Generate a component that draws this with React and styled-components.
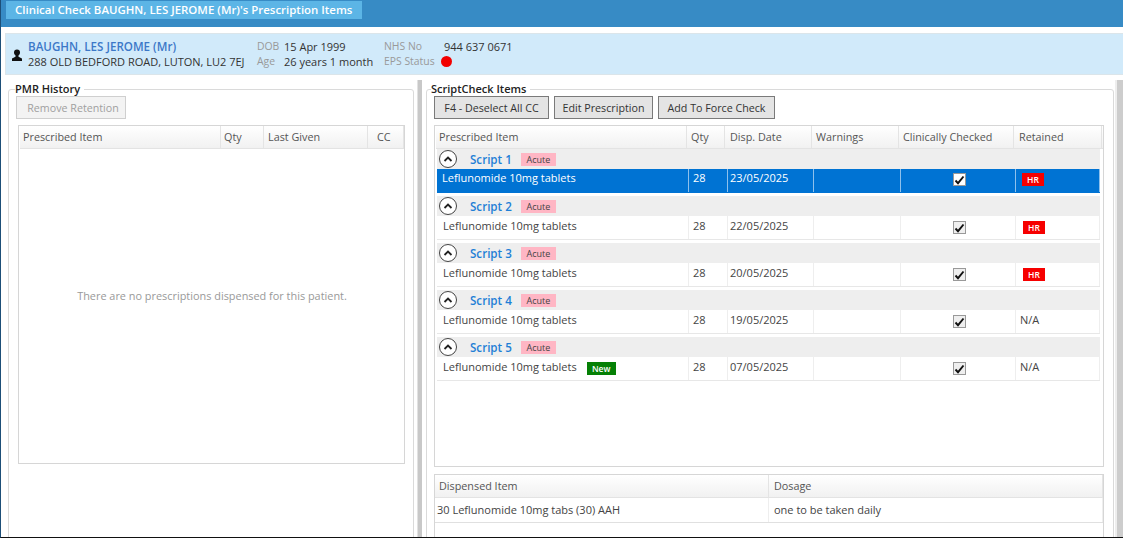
import React from "react";
import styled, { createGlobalStyle } from "styled-components";

const Global = createGlobalStyle`
  html, body { margin: 0; padding: 0; background: #fff; }
  body { font-family: "Open Sans", "Noto Sans", sans-serif; font-size: 11px; color: #444; }
  * { box-sizing: border-box; }
`;

const Page = styled.div`
  width: 1123px; height: 538px; overflow: hidden; display: flex; flex-direction: column;
  background: #fff; border-bottom: 1px solid #111; border-left: 1px solid #1d4f78;
`;
const TitleBar = styled.header`
  height: 27px; flex: none; background: #378bc5; padding: 1px 0 0 5px;
`;
const TitleTab = styled.div`
  width: 356px; height: 18px; background: #5cb5e6; color: #fff; font-weight: 600; font-size: 11.45px;
  line-height: 18px; padding-left: 9px; white-space: nowrap;
`;
const Band = styled.section`
  margin: 6px 0 0 4px; height: 42px; flex: none; background: #d1eafa; border: 1px solid #dbe5ea; border-right: 0;
  display: flex; align-items: center; padding-left: 5px; line-height: 15px; font-size: 11px; color: #333;
`;
const PersonIcon = styled.svg`width: 12px; height: 13px; margin: 3px 5px 0 0; flex: none;`;
const PatientCol = styled.div`width: 229px; white-space: nowrap;`;
const PatientName = styled.div`color: #3c78c8; font-weight: 600; font-size: 11.6px;`;
const InfoGrid = styled.div`
  display: grid; grid-template-columns: ${p => p.$cols}; white-space: nowrap;
`;
const InfoLabel = styled.span`color: #999; font-size: 10.4px;`;
const InfoValue = styled.span`color: #333; display: flex; align-items: center;`;
const RedDot = styled.i`
  display: inline-block; width: 11px; height: 11px; border-radius: 50%; background: #f20000; margin-left: -3px;
`;
const Main = styled.main`
  flex: 1; min-height: 0; display: flex; padding: 5px 0 0 7px; overflow: hidden;
`;
const Group = styled.fieldset`
  margin: 2px 0 0; padding: ${p => p.$pad}; width: ${p => p.$w}px; height: 520px; flex: none;
  border: 1px solid #dadada; border-radius: 3px; min-inline-size: 0;
`;
const Legend = styled.legend`
  padding: 0 4px 0 0; margin-left: -3px; font-size: 11px; font-weight: 600; color: #222; line-height: 14px;
`;
const Splitter = styled.div`
  width: 5px; flex: none; background: #c8c8c8; border-left: 1px solid #e2e2e2; margin: 0 4px 0 3px;
`;
const Button = styled.button`
  height: 23px; width: ${p => p.$w}px; padding: 0; font: inherit; font-size: 10.7px; border-width: 1px; border-style: solid;
  border-color: #7a7a7a; color: #333; background: #e4e4e4;
`;
const RetentionButton = styled(Button)`
  display: block; margin: 0 0 6px -2px; padding-left: 4px; border-color: #cfcfcf; color: #a0a0a0; background: #f3f3f3;
`;
const Toolbar = styled.div`display: flex; gap: 5px; margin-bottom: 6px;`;
const TableBox = styled.div`
  border: 1px solid #d6d6d6; height: ${p => p.$h}px; width: ${p => p.$w}px; padding-left: 1px;
  display: flex; flex-direction: column;
`;
const HeaderRow = styled.div`
  display: grid; grid-template-columns: ${p => p.$cols}; height: 23px; flex: none;
  background: linear-gradient(#fff, #f1f1f1); border-bottom: 1px solid #e3e3e3; color: #555;
`;
const HeaderCell = styled.div`
  border-right: 1px solid #e4e4e4; padding-left: ${p => p.$pad ?? 3}px; line-height: 22px; white-space: nowrap; font-size: 10.8px;
`;
const EmptyNote = styled.div`
  flex: 1; display: flex; align-items: center; justify-content: center; color: #999; padding-bottom: 22px; font-size: 10.9px;
`;
const ScriptGroup = styled.div`margin: 0 0 3px 1px; width: 663px;`;
const GroupHead = styled.div`
  height: 20px; background: #eee; display: flex; align-items: center; padding-left: 2px;
`;
const Collapse = styled.span`
  width: 18px; height: 18px; border: 1px solid #444; border-radius: 50%; background: #fff; flex: none;
  display: flex; align-items: center; justify-content: center;
`;
const ScriptName = styled.span`
  color: #1f7fd6; font-weight: 600; font-size: 11.6px; margin-left: 13px; width: 51px;
`;
const AcuteTag = styled.span`
  background: #ffb6c4; color: #444; font-size: 9px; height: 13px; width: 35px; line-height: 13px; text-align: center;
`;
const Row = styled.div`
  display: grid; grid-template-columns: ${p => p.$cols}; height: 24px;
  background: ${p => p.$sel ? "#0073d3" : "#fff"}; color: ${p => p.$sel ? "#fff" : "#444"};
  border-bottom: 1px solid ${p => p.$sel ? "#0073d3" : "#e7e7e7"};
`;
const Cell = styled.div`
  border-right: 1px solid ${p => p.$sel ? "#8fc1ec" : "#eeeeee"}; padding-left: ${p => p.$pad ?? 3}px; padding-top: ${p => p.$sel ? 1 : 2}px;
  line-height: 16px; white-space: nowrap; display: flex; align-items: flex-start;
  justify-content: ${p => p.$center ? "center" : "flex-start"};
`;
const Check = styled.span`
  width: 13px; height: 13px; background: ${p => p.$sel ? "#fff" : "#efefef"}; border: 1px solid #999; margin-top: 3px;
  display: flex; align-items: center; justify-content: center;
`;
const HrBadge = styled.span`
  background: #f60000; color: #fff; font-size: 8.5px; font-weight: 600; width: 22px; height: 13px; line-height: 13px;
  text-align: center; margin: 3px 0 0 ${p => p.$sel ? 2 : 3}px;
`;
const NewBadge = styled.span`
  background: #058005; color: #fff; font-size: 8.5px; font-weight: 600; width: 29px; height: 13px; line-height: 13px;
  text-align: center; margin: 3px 0 0 10px;
`;
const DispenseBox = styled(TableBox)`margin-top: 7px; padding-left: 0;`;
const DispRow = styled.div`
  display: grid; grid-template-columns: ${p => p.$cols}; height: 25px; border-bottom: 1px solid #e0e0e0; line-height: 24px;
`;
const DispCell = styled.div`
  padding-left: ${p => p.$pad}px; border-right: 1px solid #eee; white-space: nowrap;
`;
const ScrollRail = styled.div`
  width: 8px; flex: none; margin-left: 1px; background: #cdcdcd; border-left: 2px solid #eee;
`;

const Person = () => (
  <PersonIcon viewBox="0 0 12 13"><circle cx="6" cy="3.5" r="3" fill="#111" /><path d="M4.5 6h3v1.8L11 9.5V12H1V9.5l3.5-1.7z" fill="#111" /></PersonIcon>
);
const Chevron = () => (
  <svg width="10" height="8" viewBox="0 0 10 8"><path d="M1.5 6L5 2.5 8.5 6" fill="none" stroke="#222" strokeWidth="1.8" /></svg>
);
const Tick = () => (
  <svg width="11" height="10" viewBox="0 0 11 10"><path d="M1.5 5.5L4 8.2 9.5 1.5" fill="none" stroke="#111" strokeWidth="1.9" /></svg>
);

const COLS = "251px 38px 87px 87px 115px 88px";
const SCRIPT_COLS = "252px 39px 86px 87px 115px 84px";
const DISP_COLS = "334px 1fr";

const scripts = [
  { n: 1, date: "23/05/2025", ret: "HR", sel: true },
  { n: 2, date: "22/05/2025", ret: "HR" },
  { n: 3, date: "20/05/2025", ret: "HR" },
  { n: 4, date: "19/05/2025", ret: "N/A" },
  { n: 5, date: "07/05/2025", ret: "N/A", isNew: true },
];

export default function App() {
  return (
    <Page>
      <Global />
      <TitleBar><TitleTab>Clinical Check BAUGHN, LES JEROME (Mr)'s Prescription Items</TitleTab></TitleBar>
      <Band>
        <Person />
        <PatientCol>
          <PatientName>BAUGHN, LES JEROME (Mr)</PatientName>
          <div>288 OLD BEDFORD ROAD, LUTON, LU2 7EJ</div>
        </PatientCol>
        <InfoGrid $cols="27px 100px">
          <InfoLabel>DOB</InfoLabel><InfoValue>15 Apr 1999</InfoValue>
          <InfoLabel>Age</InfoLabel><InfoValue>26 years 1 month</InfoValue>
        </InfoGrid>
        <InfoGrid $cols="60px 100px">
          <InfoLabel>NHS No</InfoLabel><InfoValue>944 637 0671</InfoValue>
          <InfoLabel>EPS Status</InfoLabel><InfoValue><RedDot /></InfoValue>
        </InfoGrid>
      </Band>
      <Main>
        <Group $w={406} $pad="0 9px">
          <Legend>PMR History</Legend>
          <RetentionButton disabled $w={110}>Remove Retention</RetentionButton>
          <TableBox $w={387} $h={339}>
            <HeaderRow $cols="201px 43px 104px 1fr">
              <HeaderCell>Prescribed Item</HeaderCell>
              <HeaderCell>Qty</HeaderCell>
              <HeaderCell $pad={4}>Last Given</HeaderCell>
              <HeaderCell $pad={9}>CC</HeaderCell>
            </HeaderRow>
            <EmptyNote>There are no prescriptions dispensed for this patient.</EmptyNote>
          </TableBox>
        </Group>
        <Splitter />
        <Group $w={688} $pad="0 7px">
          <Legend>ScriptCheck Items</Legend>
          <Toolbar>
            <Button $w={115}>F4 - Deselect All CC</Button>
            <Button $w={99}>Edit Prescription</Button>
            <Button $w={117}>Add To Force Check</Button>
          </Toolbar>
          <TableBox $w={670} $h={342}>
            <HeaderRow $cols={COLS}>
              <HeaderCell>Prescribed Item</HeaderCell>
              <HeaderCell $pad={4}>Qty</HeaderCell>
              <HeaderCell $pad={5}>Disp. Date</HeaderCell>
              <HeaderCell $pad={4}>Warnings</HeaderCell>
              <HeaderCell $pad={4}>Clinically Checked</HeaderCell>
              <HeaderCell $pad={5}>Retained</HeaderCell>
            </HeaderRow>
            {scripts.map(s => (
              <ScriptGroup key={s.n}>
                <GroupHead>
                  <Collapse><Chevron /></Collapse>
                  <ScriptName>Script {s.n}</ScriptName>
                  <AcuteTag>Acute</AcuteTag>
                </GroupHead>
                <Row $cols={SCRIPT_COLS} $sel={s.sel}>
                  <Cell $sel={s.sel} $pad={s.sel ? 5 : 6}>
                    Leflunomide 10mg tablets{s.isNew && <NewBadge>New</NewBadge>}
                  </Cell>
                  <Cell $sel={s.sel} $pad={4}>28</Cell>
                  <Cell $sel={s.sel} $pad={2}>{s.date}</Cell>
                  <Cell $sel={s.sel} />
                  <Cell $sel={s.sel} $pad={3} $center><Check $sel={s.sel}><Tick /></Check></Cell>
                  <Cell $sel={s.sel} $pad={4}>
                    {s.ret === "HR" ? <HrBadge $sel={s.sel}>HR</HrBadge> : s.ret}
                  </Cell>
                </Row>
              </ScriptGroup>
            ))}
          </TableBox>
          <DispenseBox $w={670} $h={99}>
            <HeaderRow $cols={DISP_COLS}>
              <HeaderCell $pad={4}>Dispensed Item</HeaderCell>
              <HeaderCell $pad={5}>Dosage</HeaderCell>
            </HeaderRow>
            <DispRow $cols={DISP_COLS}>
              <DispCell $pad={2}>30 Leflunomide 10mg tabs (30) AAH</DispCell>
              <DispCell $pad={5}>one to be taken daily</DispCell>
            </DispRow>
          </DispenseBox>
        </Group>
        <ScrollRail />
      </Main>
    </Page>
  );
}
